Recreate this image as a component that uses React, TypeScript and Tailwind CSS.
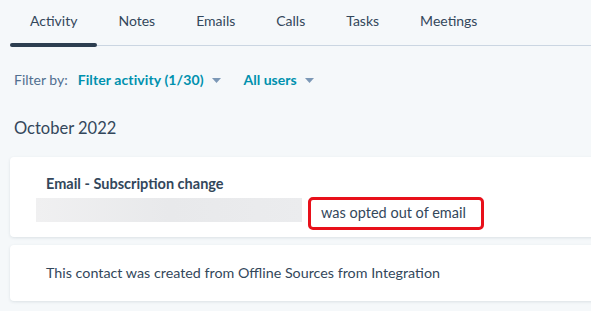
const TABS = ["Notes", "Emails", "Calls", "Tasks", "Meetings"];

function Caret() {
  return (
    <svg width="9" height="5" viewBox="0 0 9 5" className="ml-[8px] mt-[2px]">
      <path d="M0 0h9L4.5 5z" fill="#7c98b6" />
    </svg>
  );
}

export default function App() {
  return (
    <div
      className="h-[311px] w-[591px] overflow-hidden bg-[#f5f8fa] text-[#33475b]"
      style={{ fontFamily: "Lato, 'Open Sans', sans-serif" }}
    >
      <div className="ml-[10px] flex h-[46px] gap-[41px] border-b border-[#cbd6e2] text-[14px]">
        <div className="relative pl-[20px] pt-[10px]">
          Activity
          <span className="absolute bottom-[-2px] left-0 h-[4px] w-[87px] rounded-full bg-[#2d3e50]" />
        </div>
        {TABS.map((t) => (
          <div key={t} className="pt-[10px]">
            {t}
          </div>
        ))}
      </div>

      <div className="flex items-center pl-[14px] pt-[23px] text-[14px]">
        <span className="text-[#516f90]">Filter by:</span>
        <span className="ml-[10px] font-bold tracking-[0.1px] text-[#0091ae]">Filter activity (1/30)</span>
        <Caret />
        <span className="ml-[23px] font-bold text-[#0091ae]">All users</span>
        <Caret />
      </div>

      <div className="pl-[14px] pt-[26px] text-[16.5px]">October 2022</div>

      <div className="mt-[16px] flex flex-col gap-[8px] pl-[10px]">
        <div className="mr-[-10px] h-[80px] rounded-[4px] bg-white pt-[18px] shadow-[0_1px_3px_rgba(45,62,80,0.12)]">
          <div className="pl-[36px] text-[14.5px] font-bold leading-[18px]">Email - Subscription change</div>
          <div className="mt-[5px] flex items-start">
            <div className="ml-[26px] h-[24px] w-[266px] bg-gradient-to-r from-[#f0f0f1] via-[#e8e9eb] to-[#ebecee]" />
            <div className="ml-[6px] mt-[-1px] flex h-[33px] w-[176px] items-center rounded-[5px] border-[3px] border-[#e8101a] pl-[10px] text-[14.5px]">
              was opted out of email
            </div>
          </div>
        </div>
        <div className="mr-[-10px] flex h-[56px] items-center rounded-[4px] bg-white pl-[36px] text-[14.3px] shadow-[0_1px_3px_rgba(45,62,80,0.12)]">
          This contact was created from Offline Sources from Integration
        </div>
      </div>
    </div>
  );
}
